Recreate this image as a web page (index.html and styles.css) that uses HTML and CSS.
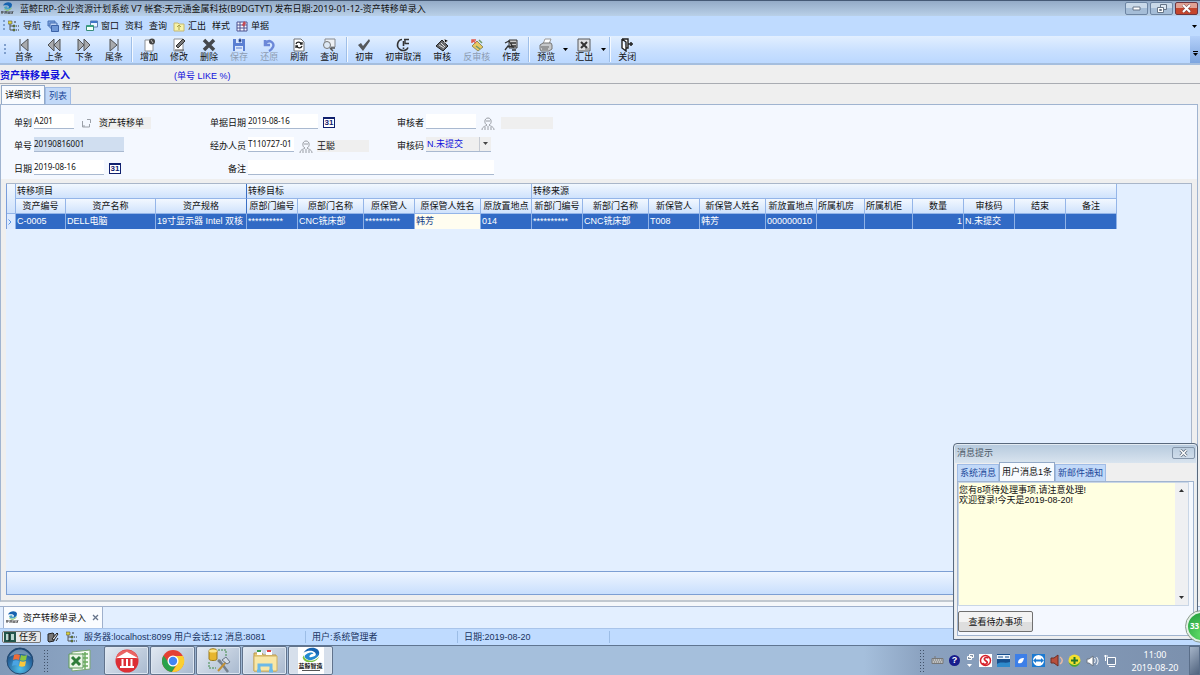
FILE: index.html
```html
<!DOCTYPE html>
<html lang="zh-CN">
<head>
<meta charset="utf-8">
<title>蓝鲸ERP-资产转移单录入</title>
<link rel="stylesheet" href="styles.css">
</head>
<body>
<svg class="defs" aria-hidden="true">
  <symbol id="logo" viewBox="0 0 26 18">
    <path d="M4 7C7 1 16-1 21 3c4 4 1 10-5 11 3-3 4-6 1-8-3-2-8-2-13 1z" fill="#1763b0"/>
    <path d="M7 9c4-3 8-3 9-1-3 0-5 2-5 4 3 1 8-1 11-5-1 8-11 12-16 6-1-1-1-3 1-4z" fill="#2389cf"/>
    <path d="M4 10c2 8 13 9 19 1-3 8-17 11-20 2z" fill="#7cc243"/>
  </symbol>
  <symbol id="mini" viewBox="0 0 13 13">
    <path d="M2 3.500C4-.5 10-.5 11 2.500c0 3-2 4-4 4 2-2 1-4-5-3z" fill="#1763b0"/>
    <path d="M3 5c3-2 5 0 3 1 2 0 4 0 5-2-1 4-7 5-8 1z" fill="#4aa3c4"/>
    <path d="M3 6.500c2 2 5 2 8-1-2 4-7 4-8 1z" fill="#7cc243"/>
    <path d="M1 9v3M0 10h3M4 9v3M4 10h2M6 12V9M8 9v3M7 11h2M10 12V9M12 9l-1 3" stroke="#333" stroke-width=".8" fill="none"/>
  </symbol>
  <symbol id="tree" viewBox="0 0 12 12">
    <path d="M2 3v7h4M2 6h4" stroke="#555" fill="none"/>
    <path d="M0 1h4v3H0z" fill="#d9d23c" stroke="#555" stroke-width=".6"/>
    <path d="M5 5h2v2H5zM5 9h2v2H5z" fill="#7c8f2c" stroke="#344" stroke-width=".5"/>
    <path d="M8 6h1M10 6h1M8 10h1M10 10h1M6 2h2" stroke="#333"/>
  </symbol>
  <symbol id="person" viewBox="0 0 14 14">
    <path d="M7 1c4 0 4 6 1 7 0 1 5 1 5 5M6 8C3 7 3 1 7 1M6 8c0 1-5 1-5 5M4 10v3M10 10v3M7 9v4M5 4h4" fill="none" stroke="#989ca3"/>
  </symbol>
  <symbol id="first" viewBox="0 0 14 14"><path d="M3 1v12M11 1v12L4 7z" fill="#a8aaad" stroke="#505255"/></symbol>
  <symbol id="rew" viewBox="0 0 14 14"><path d="M7 1v12L1 7zM13 1v12L7 7z" fill="#a8aaad" stroke="#505255"/></symbol>
  <symbol id="caret" viewBox="0 0 5 3"><path d="M0 0h5L2.500 3z" fill="#000"/></symbol>
</svg>

<header class="titlebar">
  <svg class="i13"><use href="#mini"/></svg>
  <span class="apptitle">蓝鲸ERP-企业资源计划系统 V7 帐套:天元通金属科技(B9DGTYT) 发布日期:2019-01-12-资产转移单录入</span>
  <div class="winbtns">
    <button aria-label="最小化"><svg width="9" height="5"><path d="M1 1h7v3H1z" fill="#fff" stroke="#667587"/></svg></button>
    <button aria-label="还原"><svg width="10" height="9"><path d="M3.500 .5h6v5h-6z" fill="#dce7f2" stroke="#667587"/><path d="M.5 3.500h6v5h-6zM2.500 5.500h2v1h-2z" fill="#fff" stroke="#667587"/></svg></button>
    <button class="close" aria-label="关闭"><svg width="9" height="9"><path d="M1 1l7 7M8 1L1 8" stroke="#75474a" stroke-width="3"/><path d="M1 1l7 7M8 1L1 8" stroke="#fff" stroke-width="2"/></svg></button>
  </div>
</header>

<nav class="menubar">
  <i class="grip"></i>
  <button><svg class="i12"><use href="#tree"/></svg>导航</button>
  <button><svg class="i12" viewBox="0 0 12 12"><path d="M1 1h7v5H1z" fill="#7fa4dd" stroke="#4770b5"/><path d="M3 3h7v5H3z" fill="#bed3f3" stroke="#4770b5"/><path d="M4.500 5.500h7v6h-7z" fill="#6f97d6" stroke="#3c63a8"/></svg>程序</button>
  <button><svg class="i12" viewBox="0 0 12 12"><path d="M4.500 1h7v6h-7z" fill="#e9f4ff" stroke="#5a7fae"/><path d="M5 2h6" stroke="#3f76c9" stroke-width="2"/><path d="M.5 5.500h7v5h-7z" fill="#f3fff7" stroke="#388c78"/><path d="M1 6h6" stroke="#37a081" stroke-width="2"/></svg>窗口</button>
  <button>资料</button>
  <button>查询</button>
  <button><svg class="i12" viewBox="0 0 12 12"><path d="M1 3h4l1 1h5v7H1z" fill="#f7f3a8" stroke="#c5b872"/><path d="M6 10V6M4 7l2-2 2 2" fill="none" stroke="#a9a14a"/></svg>汇出</button>
  <button>样式</button>
  <button><svg class="i12" viewBox="0 0 12 12"><path d="M1 2h10v9H1z" fill="#f7f7ff" stroke="#4c5290"/><path d="M1 5h10M1 8h10M4 2v9M8 2v9" stroke="#4c5290"/><path d="M6 5l2-4 2 2-2 4z" fill="#c34a54"/></svg>单据</button>
  <svg class="caret menuend"><use href="#caret"/></svg>
</nav>

<div class="toolbar" role="toolbar">
  <i class="grip"></i>
  <button><svg><use href="#first"/></svg>首条</button>
  <button><svg><use href="#rew"/></svg>上条</button>
  <button><svg class="flip"><use href="#rew"/></svg>下条</button>
  <button><svg class="flip"><use href="#first"/></svg>尾条</button>
  <i class="sep"></i>
  <button><svg viewBox="0 0 14 14"><path d="M3 2h8v11H3z" fill="#fff" stroke="#8b8f94"/><circle cx="10" cy="3.500" r="3" fill="#444"/><path d="M9 2l2 3" stroke="#bbb"/></svg>增加</button>
  <button><svg viewBox="0 0 14 14"><path d="M2 1h9v12H2z" fill="#fff" stroke="#8b8f94"/><path d="M4 8l2 2 7-7-2-2z" fill="#777" stroke="#333"/><path d="M3 12h9" stroke="#555"/></svg>修改</button>
  <button><svg viewBox="0 0 14 14"><path d="M2 2l10 10M12 2L2 12" stroke="#45484c" stroke-width="3.500"/></svg>删除</button>
  <button disabled><svg viewBox="0 0 14 14"><path d="M1 1h12v12H1z" fill="#5b7fd2"/><path d="M4 1h6v4H4zM3 8h8v5H3z" fill="#dce8fb"/><path d="M7 1h2v3H7zM4 10h6" stroke="#5b7fd2"/></svg>保存</button>
  <button disabled><svg viewBox="0 0 14 14"><path d="M3 2v5h5M3 6c4-6 10-1 8 3-1 2-2 3-4 4" fill="none" stroke="#6c88d8" stroke-width="2.500"/></svg>还原</button>
  <button><svg viewBox="0 0 14 14"><path d="M2 1h7l3 3v9H2z" fill="#fff" stroke="#6f7378"/><path d="M4 6c1-3 5-2 5 0M10 4v2H8M10 8c-1 3-5 2-5 0M4 10V8h2" fill="none" stroke="#222" stroke-width="1.300"/></svg>刷新</button>
  <button><svg viewBox="0 0 14 14"><path d="M3 1h10v8H3z" fill="#edf0f4" stroke="#84888e"/><circle cx="5" cy="7" r="3.500" fill="#dde8f4" stroke="#777"/><path d="M8 10l3 3M9 10h4" stroke="#555" stroke-width="1.500"/></svg>查询</button>
  <i class="sep"></i>
  <button><svg viewBox="0 0 14 14"><path d="M1 7l3-2 2 3 6-7 1 2-7 10z" fill="#55585c"/></svg>初审</button>
  <button><svg viewBox="0 0 14 14"><path d="M6 1.500C1 2 0 9 4 11.500c3 2 7 1 8-2M7.500 3v5M7.500 9.500v1.500" fill="none" stroke="#333" stroke-width="1.600"/><path d="M8 1.500h5M9 1.500v4h4" fill="none" stroke="#333" stroke-width="1.400"/></svg>初审取消</button>
  <button><svg viewBox="0 0 14 14"><path d="M7 2l6 6-5 5-7-5z" fill="#67696c" stroke="#222"/><path d="M4 7l5 3M9 1l1 4 3-2M6 5l4 4" stroke="#ddd"/></svg>审核</button>
  <button disabled><svg viewBox="0 0 14 14"><path d="M7 3l6 6-5 4-6-5z" fill="#e8c863" stroke="#8e8c61"/><path d="M2 2l4 3M2 5V2h4" stroke="#e05a50" stroke-width="1.500" fill="none"/><path d="M9 2l3 3M6 8l4 3" stroke="#6f9a6b" stroke-width="1.500"/></svg>反审核</button>
  <button><svg viewBox="0 0 14 14"><path d="M5 2h8v8H5z" fill="#ccc" stroke="#333"/><path d="M1 5l4-2 4 6-5-1-3 4M7 5h5M7 8h5M8 12h4" stroke="#333" stroke-width="1.300" fill="none"/></svg>作废</button>
  <i class="sep"></i>
  <button><svg viewBox="0 0 14 14"><path d="M4 6l2-5h6l-2 5z" fill="#fff" stroke="#999"/><path d="M1 7l3-2h8l1 2v4l-3 2H2l-1-2z" fill="#c6c8ca" stroke="#777"/><path d="M2 9h8M3 11h6" stroke="#666"/></svg>预览</button>
  <button class="drop" aria-label="预览选项"><svg class="caret"><use href="#caret"/></svg></button>
  <button><svg viewBox="0 0 14 14"><path d="M1 1h12v12H1z" fill="#dddfe1" stroke="#56595d"/><path d="M4 4l6 6M10 4l-6 6" stroke="#333" stroke-width="2"/><path d="M8 11h4" stroke="#777"/></svg>汇出</button>
  <button class="drop" aria-label="汇出选项"><svg class="caret"><use href="#caret"/></svg></button>
  <i class="sep"></i>
  <button><svg viewBox="0 0 14 14"><path d="M2 1h6v9H6M2 1v9l4 3V4L2 1" fill="#fff" stroke="#222" stroke-width="1.400"/><path d="M8 6h5M11 4v4" stroke="#222" stroke-width="1.500"/></svg>关闭</button>
  <div class="endcap"><svg width="5" height="5"><path d="M0 .5h5" stroke="#000"/><path d="M0 2h5L2.500 5z"/></svg></div>
</div>

<div class="heading"><h1>资产转移单录入</h1><span>(单号 LIKE %)</span></div>

<div class="tabs pagetabs" role="tablist">
  <button role="tab" aria-selected="true">详细资料</button>
  <button role="tab" aria-selected="false">列表</button>
</div>

<main class="panel">
  <form class="form">
    <div class="field"><label for="kind">单别</label><input id="kind" class="w40" value="A201"><svg class="pick" viewBox="0 0 14 14"><path d="M3.500 5v6h7V8M5 11V9M8 3.500h3.500V7" fill="none" stroke="#9ba0a8"/></svg><output class="out">资产转移单</output></div>
    <div class="field mid"><label for="docdate">单据日期</label><input id="docdate" class="w70" value="2019-08-16"><span class="cal">31</span></div>
    <div class="field"><label for="auditor">审核者</label><input id="auditor" class="w50"><svg class="i14"><use href="#person"/></svg><output class="out blank"></output></div>

    <div class="field"><label for="num">单号</label><input id="num" class="w90 key" value="20190816001"></div>
    <div class="field mid"><label for="staff">经办人员</label><input id="staff" class="w46" value="T110727-01"><svg class="i14"><use href="#person"/></svg><output class="out">王聪</output></div>
    <div class="field"><label for="code">审核码</label><span class="selectbox"><select id="code"><option>N.未提交</option></select><span class="arrow"><svg class="caret"><use href="#caret"/></svg></span></span></div>

    <div class="field"><label for="date">日期</label><input id="date" class="w70" value="2019-08-16"><span class="cal">31</span></div>
    <div class="field mid wide"><label for="note">备注</label><input id="note" class="w246"></div>
  </form>

  <section class="gridbox">
    <table>
      <colgroup><col class="c10"><col class="c50"><col class="c90"><col class="c91"><col class="c51"><col class="c66"><col class="c51"><col class="c66"><col class="c51"><col class="c51"><col class="c66"><col class="c51"><col class="c66"><col class="c51"><col class="c48"><col class="c48"><col class="c51"><col class="c51"><col class="c51"><col class="c51"></colgroup>
      <thead>
        <tr class="bands"><th rowspan="2"></th><th colspan="3" class="bandend">转移项目</th><th colspan="5">转移目标</th><th colspan="11">转移来源</th></tr>
        <tr><th>资产编号</th><th>资产名称</th><th class="bandend">资产规格</th><th>原部门编号</th><th>原部门名称</th><th>原保管人</th><th>原保管人姓名</th><th>原放置地点</th><th>新部门编号</th><th>新部门名称</th><th>新保管人</th><th>新保管人姓名</th><th>新放置地点</th><th class="left">所属机房</th><th class="left">所属机柜</th><th>数量</th><th>审核码</th><th>结束</th><th>备注</th></tr>
      </thead>
      <tbody>
        <tr><td class="ind"><svg width="4" height="6"><path d="M.5 .5L3 3 .5 5.500" fill="none" stroke="#5b94e0"/></svg></td><td>C-0005</td><td>DELL电脑</td><td>19寸显示器 Intel 双核</td><td>**********</td><td>CNC铣床部</td><td>**********</td><td class="edit">韩芳</td><td>014</td><td>**********</td><td>CNC铣床部</td><td>T008</td><td>韩芳</td><td>000000010</td><td></td><td></td><td class="num">1</td><td>N.未提交</td><td></td><td></td></tr>
      </tbody>
    </table>
    <div class="gridfoot"></div>
  </section>
</main>

<div class="dock">
  <button class="docktab"><svg class="i13"><use href="#mini"/></svg>资产转移单录入<svg class="x" width="7" height="7"><path d="M1 1l5 5M6 1L1 6" stroke="#66748a" stroke-width="1.300"/></svg></button>
</div>

<footer class="status">
  <button class="task"><svg width="12" height="10"><path d="M0 0h12v10H0z" fill="#24564c"/><path d="M2 2h3v6H2zM7 2h3v6H7z" fill="#b8d5ce"/><path d="M5 1v8" stroke="#111"/></svg>任务</button>
  <svg class="i12" viewBox="0 0 12 12"><path d="M1 3l5-1 1 1v7l-5 1-1-1z" fill="#777" stroke="#222"/><path d="M5 8l5-6 1 1-4 6zM9 10l2-3" fill="#ddd" stroke="#222"/></svg>
  <svg class="i12 treegap"><use href="#tree"/></svg>
  <span class="s1">服务器:localhost:8099 用户会话:12 消息:8081</span>
  <span class="s2">用户:系统管理者</span>
  <span class="s2">日期:2019-08-20</span>
</footer>

<div class="taskbar">
  <button class="orb" aria-label="开始"><svg viewBox="0 0 28 28"><defs><radialGradient id="orb" cx=".5" cy=".8" r=".8"><stop offset="0" stop-color="#4fc0ea"/><stop offset=".6" stop-color="#2a6ba4"/><stop offset="1" stop-color="#173f6e"/></radialGradient></defs><circle cx="14" cy="14" r="13" fill="url(#orb)" stroke="#24486f"/><path d="M3 10c5-10 17-10 22 0-7-4-15-4-22 0z" fill="#fff" opacity=".35"/><path d="M8 8c2-1 4-1 6 0l-1 5c-2-1-4-1-6 0z" fill="#ef6b35"/><path d="M15 8c2 1 4 1 6 0l-1 5c-2 1-4 1-6 0z" fill="#8bc540"/><path d="M7 14c2-1 4-1 6 0l-1 5c-2-1-4-1-6 0z" fill="#4aa4e4"/><path d="M14 14c2 1 4 1 6 0l-1 5c-2 1-4 1-6 0z" fill="#fbc73b"/></svg></button>
  <i class="dots"></i>
  <button class="app flat" aria-label="Excel"><svg width="26" height="24" viewBox="0 0 26 24"><path d="M4 3l18-2v19L4 22z" fill="#f5fbf2" stroke="#7aa873"/><path d="M14 5h6M14 9h6M14 13h6M14 17h6M17 3v17" stroke="#6aac5e" stroke-width="1.500"/><path d="M1 5h14v14H1z" fill="#e9f5e5" stroke="#5c9a58"/><path d="M4 8l8 8M12 8l-8 8" stroke="#2f7d3a" stroke-width="3"/></svg></button>
  <button class="app" aria-label="博物馆"><svg width="24" height="24" viewBox="0 0 24 24"><circle cx="12" cy="12" r="11.500" fill="#dc2f35"/><path d="M1 10c2-12 20-12 22 0-6-3-16-3-22 0z" fill="#f58a83" opacity=".6"/><path d="M12 4l7 4H5zM7.500 10v7M12 10v7M16.500 10v7M5 18h14" stroke="#fff" stroke-width="2" fill="#fff"/></svg></button>
  <button class="app" aria-label="浏览器"><svg width="24" height="24" viewBox="0 0 24 24"><circle cx="12" cy="12" r="11" fill="#e34133"/><path d="M2.500 6.500A11 11 0 0 0 11 23l5-9h-8z" fill="#29a24c"/><path d="M22 7A11 11 0 0 1 11 23l6-9-3-7z" fill="#fbcf31"/><circle cx="12" cy="12" r="5.500" fill="#fff"/><circle cx="12" cy="12" r="4.200" fill="#4285f4"/></svg></button>
  <button class="app" aria-label="数据工具"><svg width="26" height="26" viewBox="0 0 26 26"><path d="M3 3c0-3 8-3 8 0v8c0 2-8 2-8 0z" fill="#e7b62e" stroke="#9b7a1d"/><ellipse cx="7" cy="3" rx="4" ry="1.500" fill="#fbe58b"/><path d="M12 2h8v7M3 14v6h7" fill="none" stroke="#3f8a46" stroke-dasharray="2 1"/><path d="M13 12l9 12M12 12l3 3" stroke="#75808c" stroke-width="2.500"/><path d="M12 23l8-9" stroke="#c19138" stroke-width="2"/><path d="M16 12l4-3 4 5-3 2z" fill="#d4dce6" stroke="#697687"/></svg></button>
  <button class="app" aria-label="资源管理器"><svg width="26" height="24" viewBox="0 0 26 24"><path d="M2 4h8l1 2h13v16H2z" fill="#eacb72" stroke="#b9964a"/><path d="M5 2h5v4H5zM14 2h6v4h-6z" fill="#fff"/><path d="M5 2h4" stroke="#3b9b4c" stroke-width="2"/><path d="M15 2h4" stroke="#d44" stroke-width="2"/><path d="M2 7h23v15H2z" fill="#f8e7a6" stroke="#cdb062"/><path d="M7 22v-6h12v6M5 22h4M17 22h4" fill="none" stroke="#6bb9e8" stroke-width="3"/></svg></button>
  <button class="app current"><span class="brand"><svg width="24" height="15"><use href="#logo"/></svg><b>蓝鲸智造</b><i></i></span></button>
  <div class="tray">
    <i class="dots"></i>
    <svg class="kb" width="13" height="9"><path d="M1 2.500h11v5H1zM4 2V0" fill="#bdbfc0" stroke="#777"/><path d="M2 4h9M3 6h7" stroke="#777" stroke-dasharray="1 1"/></svg>
    <span class="help">?</span>
    <svg width="8" height="14"><path d="M3.500 .5h4v3h-4zM1.500 2.500h4v3h-4z" fill="#8796a8" stroke="#fff"/><path d="M1 10h5l-2.500 3z" fill="#fff"/></svg>
    <svg width="13" height="13"><path d="M0 0h13v13H0z" fill="#fff"/><circle cx="6.500" cy="6.500" r="5" fill="none" stroke="#d6232d" stroke-width="1.500"/><path d="M9.500 4C7 2.500 4 4.500 6 6.200s3.500 2 1 3.800C5.500 10.500 4 10 3.500 9" fill="none" stroke="#d6232d" stroke-width="1.700"/></svg>
    <svg width="13" height="13"><path d="M0 0h13v13H0z" fill="#174f8d"/><path d="M0 1h13v4H0z" fill="#e9f2fb"/><path d="M1 3h5M8 3h4" stroke="#174f8d"/><path d="M0 10c4-3 8 0 13-2v5H0z" fill="#2f8acb"/></svg>
    <svg width="12" height="13"><path d="M0 0h12v13H0z" fill="#3d7fe8"/><path d="M3 9c0-4 3-5 6-5-1 4-2 6-6 5z" fill="#fff"/></svg>
    <svg width="13" height="13"><path d="M0 0h13v13H0z" fill="#1b7ad2"/><circle cx="6.500" cy="6.500" r="5.500" fill="#fff"/><path d="M1 6.500l3-2.500v1.500h5V4l3 2.500L9 9V7.500H4V9z" fill="#1b7ad2"/></svg>
    <svg width="13" height="13"><path d="M1 4h3l4-3v11L4 9H1z" fill="#b84f3c" stroke="#702e25"/><path d="M10 3c3 2 3 5 0 7" fill="none" stroke="#e9b9a4" stroke-width="1.500"/></svg>
    <svg width="13" height="13"><circle cx="6.500" cy="6.500" r="6" fill="#f4e030"/><path d="M.5 8c2 7 11 6 12-1-3 5-8 5-12 1z" fill="#46a33a"/><path d="M6.500 3v7M3 6.500h7" stroke="#23762c" stroke-width="2"/></svg>
    <svg width="13" height="13"><path d="M1 5h2l4-3v10L3 9H1z" fill="#fff" stroke="#6c7784"/><path d="M8.500 4c1 2 1 3 0 5M10.500 3c2 3 2 5 0 8" fill="none" stroke="#fff"/></svg>
    <svg width="13" height="13"><path d="M3.500 3.500h8v7h-8zM5 12.500h6M1.500 1v6M0 2h4" fill="#7388a4" stroke="#fff"/></svg>
    <div class="clock">11:00<br>2019-08-20</div>
    <button class="desk" aria-label="显示桌面"></button>
  </div>
</div>

<aside class="popup">
  <header><span>消息提示</span><button aria-label="关闭"><svg width="9" height="8"><path d="M1.500 1l6 6M7.500 1l-6 6" stroke="#5f6d7d" stroke-width="3"/><path d="M1.500 1l6 6M7.500 1l-6 6" stroke="#fff" stroke-width="1.500"/></svg></button></header>
  <div class="tabs" role="tablist">
    <button role="tab" aria-selected="false">系统消息</button>
    <button role="tab" aria-selected="true">用户消息1条</button>
    <button role="tab" aria-selected="false">新邮件通知</button>
  </div>
  <div class="popbody">
    <div class="msg">
      <textarea aria-label="用户消息" readonly>您有8项待处理事项,请注意处理!
欢迎登录!今天是2019-08-20!</textarea>
      <div class="scroll"><svg class="caret up"><use href="#caret"/></svg><svg class="caret"><use href="#caret"/></svg></div>
    </div>
    <button class="todo">查看待办事项</button>
  </div>
</aside>
<div class="ball">33</div>
</body>
</html>
```
FILE: styles.css
```css
* { box-sizing: border-box; }
body {
  margin: 0;
  min-height: 100vh;
  display: flex;
  flex-direction: column;
  position: relative;
  overflow: hidden;
  background: #efefef;
  color: #111;
  font: 9px/12px "Liberation Sans", "Noto Sans CJK SC", sans-serif;
}
button, input, select, textarea { font: inherit; color: inherit; margin: 0; padding: 0; border: 0; background: none; border-radius: 0; outline: 0; }
button { white-space: nowrap; }
svg { display: block; flex: none; }
.defs { position: absolute; width: 0; height: 0; }
.i12 { width: 12px; height: 12px; }
.i13 { width: 13px; height: 13px; }
.i14 { width: 14px; height: 14px; }
.caret { width: 5px; height: 3px; }
.grip { flex: none; width: 2px; height: 12px; background: repeating-linear-gradient(#7f9fcd 0 2px, transparent 2px 4px); }

.titlebar {
  height: 16px;
  display: flex;
  align-items: center;
  gap: 6px;
  padding: 0 2px 0 1px;
  border-top: 1px solid #465a76;
  background: linear-gradient(#94abc7, #b9d0e8);
}
.apptitle { font-family: "Noto Sans", "Noto Sans CJK SC", sans-serif; white-space: nowrap; }
.winbtns { margin-left: auto; display: flex; gap: 2px; }
.winbtns button { width: 23px; height: 13px; display: grid; place-items: center; border: 1px solid #6d85a3; border-radius: 2px; background: linear-gradient(#c9d9e9 50%, #a5bdd7 50%); }
.winbtns .close { border-color: #6d3540; background: linear-gradient(#e0a193 50%, #c4452c 50%); }

.menubar { height: 20px; display: flex; align-items: center; gap: 4px; padding: 0 3px; background: #bfdbff; }
.menubar button { display: flex; align-items: center; gap: 3px; padding: 0 1px; }
.menubar .grip { margin-right: -2px; }
.menuend { margin-left: auto; }

.toolbar { height: 29px; display: flex; align-items: center; padding-left: 4px; border-bottom: 2px solid #a5bede; background: linear-gradient(#e2efff, #c9e0ff 55%, #bbd8ff); }
.toolbar .grip { margin-right: 3px; }
.toolbar button { padding: 1px 6px 0; display: flex; flex-direction: column; align-items: center; line-height: 11px; }
.toolbar button svg:not(.caret) { width: 14px; height: 14px; }
.toolbar button:disabled { color: #8d9cb2; }
.toolbar .drop { width: 8px; padding: 0; }
.toolbar .sep { width: 5px; height: 25px; background: linear-gradient(90deg, transparent 2px, #9fbfe8 2px 3px, #f4f9ff 3px 4px, transparent 4px); }
.flip { transform: scaleX(-1); }
.endcap { margin-left: auto; align-self: stretch; width: 10px; display: grid; align-content: end; justify-content: center; padding-bottom: 7px; background: linear-gradient(#b5d1fa, #7da5df); }

.heading { height: 19px; display: flex; align-items: center; gap: 104px; border-bottom: 1px solid #a9acb2; color: #1010dc; padding-top: 3px; }
.heading h1 { margin: 0; font-size: 10px; line-height: 12px; }

.tabs { display: flex; align-items: flex-end; }
.tabs button { height: 17px; padding: 0 3px; border: 1px solid #a0bce6; border-bottom: 0; background: #c2d9f8; color: #1a4798; }
.tabs button[aria-selected="true"] { height: 19px; border-color: #93a9c7; background: #f8fbff; color: #111; }
.pagetabs { height: 20px; padding-left: 1px; }

.panel { flex: 1; display: flex; flex-direction: column; margin-right: 2px; padding: 0 5px 5px; border: 1px solid #a0b4d0; border-bottom: 2px solid #c1c8d0; background: #efefef; }
.form { display: grid; grid-template-columns: 195px 188px 1fr; grid-auto-rows: 23px; margin: 0 -5px; padding: 6px 0 0 13px; height: 74px; background: #f4f8ff; }
.field { display: flex; align-items: center; }
.field label { flex: none; margin-right: 2px; }
.field.mid label { width: 37px; text-align: right; }
.field.wide { grid-column: 2 / 4; }
.field input { height: 15px; margin-bottom: 3px; padding-bottom: 1px; border-bottom: 1px solid #a9b9d0; background: #fff; font-family: "Noto Sans", sans-serif; font-size: 8px; }
.field .key { background: #d0def0; }
.w40 { width: 40px; } .w46 { width: 46px; } .w50 { width: 50px; } .w70 { width: 70px; } .w90 { width: 90px; } .w246 { width: 246px; }
.field .i14 { margin: 2px 0 0 5px; }
.cal { width: 12px; height: 11px; margin-left: 5px; border: 1px solid #10206e; border-top-width: 2px; background: #fff; color: #10206e; font-size: 8px; font-weight: 700; line-height: 8px; display: grid; justify-content: center; }
.pick { width: 14px; height: 14px; margin: 0 2px 0 5px; }
.out { width: 52px; height: 12px; margin-left: 4px; background: #efefef; white-space: nowrap; }
.out.blank { margin-left: 6px; }
.selectbox { display: grid; grid-template-columns: 1fr 12px; align-items: center; width: 65px; height: 15px; margin-bottom: 3px; border-bottom: 1px solid #a9b9d0; background: #efefef; color: #1010dc; }
.selectbox select { grid-area: 1 / 1 / 2 / 3; width: 100%; height: 14px; appearance: none; padding-left: 1px; }
.selectbox .arrow { grid-area: 1 / 2; align-self: stretch; display: grid; place-items: center; border-left: 1px solid #b4bbc6; pointer-events: none; opacity: .7; }

.gridbox { flex: 1; display: flex; flex-direction: column; margin-top: 4px; border: 1px solid #a9b6c9; border-width: 1px 1px 0 0; background: #e3efff; }
table { width: 1111px; table-layout: fixed; border-collapse: separate; border-spacing: 0; border-left: 1px solid #7a9ddb; }
.c10 { width: 9px; } .c48 { width: 48px; } .c50 { width: 50px; } .c51 { width: 51px; } .c66 { width: 66px; } .c90 { width: 90px; } .c91 { width: 91px; }
th, td { height: 15px; padding: 0 1px; overflow: hidden; white-space: nowrap; line-height: 13px; }
th { border: solid #94b5e8; border-width: 0 1px 1px 0; background: linear-gradient(#f2f8ff, #cfe2fc); font-weight: 400; }
.bands th, th.left { text-align: left; }
.bandend { border-right-color: #3a6fc4; }
td { border-right: 1px solid #8fb1e6; background: #316ac5; color: #fff; text-align: left; }
td.ind { background: #dceaff; }
td.num { text-align: right; }
td.edit { background: #fffdf0; color: #123a86; }
.gridfoot { height: 24px; margin-top: auto; border: 1px solid #7d9fd3; background: linear-gradient(#eef5ff, #c9dffd); }

.dock { height: 26px; padding: 4px 3px 0; background: linear-gradient(#f5f7fa 4px, #9fb0cc 4px 5px, #e3efff 5px); }
.docktab { height: 22px; display: flex; align-items: center; gap: 4px; padding: 0 3px 0 2px; border: 1px solid #9fb0cc; border-bottom: 0; background: #fafcff; }
.docktab .x { margin-left: 2px; }

.status { height: 17px; display: flex; align-items: center; padding-left: 2px; gap: 6px; border-top: 1px solid #a9c4ea; background: #bfdbff; color: #18335f; }
.task { height: 12px; display: flex; align-items: center; gap: 3px; padding: 0 3px 0 1px; border: 1px solid #777; border-radius: 2px; background: #e9e9e9; color: #111; }
.treegap { margin-left: 1px; }
.status span { padding-right: 4px; border-right: 1px solid #9cbde6; white-space: nowrap; }
.s1 { width: 222px; } .s2 { width: 146px; }

.taskbar { height: 30px; display: flex; align-items: center; gap: 1px; padding-left: 6px; border-top: 1px solid #5f7591; background: linear-gradient(90deg, #8199b8, #a5bfdc 25% 72%, #8aa1bf 77%, #7b90ad); }
.orb, .orb svg { width: 28px; height: 28px; }
.dots { width: 6px; height: 24px; margin: 0 8px; background: radial-gradient(circle, #42536a 1px, transparent 1px) 0 0 / 3px 3px; }
.app { width: 45px; height: 29px; display: grid; place-items: center; border: 1px solid #61738c; border-radius: 2px; background: linear-gradient(135deg, #e2e9f2, #a8b9cf); box-shadow: inset 0 0 0 1px #dce6f1; }
.app.flat { border-color: transparent; background: none; box-shadow: none; }
.app.current { background: #d6dfeb; }
.brand { width: 26px; height: 27px; display: flex; flex-direction: column; align-items: center; background: #fff; overflow: hidden; }
.brand b { font-size: 6px; line-height: 8px; }
.brand i { width: 18px; height: 1px; background: #555; }
.tray { margin-left: auto; display: flex; align-items: center; gap: 5px; height: 100%; color: #fff; }
.tray .dots { margin: 0 1px 0 0; }
.help { width: 11px; height: 11px; margin-right: 1px; border-radius: 50%; background: #171d8c; font: 700 9px/11px "Liberation Sans", sans-serif; text-align: center; }
.clock { width: 58px; margin-left: 4px; text-align: center; font: 9px/13px "Noto Sans", sans-serif; }
.desk { width: 11px; height: 29px; border: 1px solid #5a6e89; background: linear-gradient(135deg, #a5b4c8, #50637e); }

.popup { position: absolute; right: 2px; bottom: 35px; width: 245px; display: flex; flex-direction: column; padding: 0 3px 3px; border: 1px solid #59697d; border-radius: 4px 4px 0 0; background: linear-gradient(#b5c9dd, #d9e4ef 19px, #efefef 19px); box-shadow: inset 0 0 0 1px #e3ebf3; }
.popup header { height: 18px; display: flex; align-items: center; justify-content: space-between; color: #4c5866; }
.popup header button { width: 23px; height: 12px; margin-right: -1px; display: grid; place-items: center; border: 1px solid #8596aa; border-radius: 2px; }
.popup .tabs button { padding: 0 2px; }
.popbody { padding: 0 4px 3px 0; border: 1px solid #a0b4d0; background: #f4f8ff; }
.msg { display: flex; height: 124px; border: 1px solid #c9d6e6; }
.msg textarea { flex: 1; min-width: 0; resize: none; overflow: hidden; background: #ffffe1; line-height: 10px; padding-top: 2px; }
.scroll { width: 13px; display: flex; flex-direction: column; align-items: center; justify-content: space-between; padding: 6px 0; background: #efefef; opacity: .8; }
.up { transform: scaleY(-1); }
.todo { width: 75px; height: 21px; margin-top: 5px; border: 1px solid #707070; border-radius: 2px; background: linear-gradient(#f3f3f3 50%, #dedede 50%); }
.ball { position: absolute; right: -17px; bottom: 33px; width: 31px; height: 31px; padding-left: 2px; border: 2px solid #e3f1e5; border-radius: 50%; outline: 1px solid #8b9a8e; background: radial-gradient(circle at 50% 80%, #5fdc66, #1f9a3c); color: #fff; font: 700 8px/26px "Noto Sans", sans-serif; }
```
